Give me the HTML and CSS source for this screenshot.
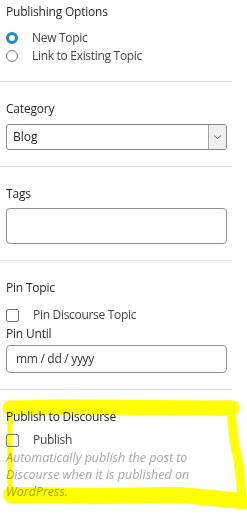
FILE: index.html
```html
<!DOCTYPE html>
<html>
<head>
<meta charset="utf-8">
<link rel="stylesheet" href="styles.css">
</head>
<body>
<div class="panel">
  <section class="sec sec-first">
    <h2 class="title">Publishing Options</h2>
    <div class="radios">
      <div class="opt"><span class="radio radio-on"></span>New Topic</div>
      <div class="opt"><span class="radio"></span>Link to Existing Topic</div>
    </div>
  </section>
  <section class="sec">
    <h2 class="title">Category</h2>
    <div class="select">
      <span class="select-value">Blog</span>
      <span class="select-btn"><svg width="9" height="6" viewBox="0 0 9 6"><path d="M1 1.5 L4.5 4.5 L8 1.5" fill="none" stroke="#6b6b6b" stroke-width="1"/></svg></span>
    </div>
  </section>
  <section class="sec">
    <h2 class="title">Tags</h2>
    <div class="field field-tags"></div>
  </section>
  <section class="sec">
    <h2 class="title">Pin Topic</h2>
    <div class="opt opt-check"><span class="check"></span>Pin Discourse Topic</div>
    <div class="sublabel">Pin Until</div>
    <div class="field field-date">mm / dd / yyyy</div>
  </section>
  <section class="sec sec-last">
    <h2 class="title">Publish to Discourse</h2>
    <div class="opt opt-check2"><span class="check"></span>Publish</div>
    <p class="desc">Automatically publish the post to Discourse when it is published on WordPress.</p>
  </section>
</div>
<svg class="highlight" width="247" height="521" viewBox="0 0 247 521">
  <path d="M10 497 L10 440 L10 410" fill="none" stroke="#ffff00" stroke-width="5" stroke-linecap="round"/>
  <path d="M10 408 L60 407 L232 408" fill="none" stroke="#ffff00" stroke-width="15" stroke-linecap="round" stroke-linejoin="round"/>
  <path d="M231 410 L234 440 L239 465 L242 496" fill="none" stroke="#ffff00" stroke-width="9" stroke-linecap="round" stroke-linejoin="round"/>
  <path d="M11 495 L100 496 L180 495 L243 501" fill="none" stroke="#ffff00" stroke-width="16" stroke-linecap="round" stroke-linejoin="round"/>
</svg>
</body>
</html>
```
FILE: styles.css
```css
html, body {
  margin: 0;
  padding: 0;
  background: #ffffff;
}
body {
  width: 247px;
  height: 521px;
  position: relative;
  overflow: hidden;
  font-family: "Open Sans", "Noto Sans", sans-serif;
  font-size: 12px;
  color: #32373c;
}
.panel {
  width: 232px;
}
.sec {
  padding: 18px 5px 16px 6px;
  border-bottom: 1px solid #e2e4e7;
}
.sec-first {
  padding-top: 3px;
}
.sec-last {
  border-bottom: none;
}
.title {
  margin: 0;
  font-size: 12px;
  font-weight: 400;
  line-height: 18px;
  letter-spacing: -0.2px;
  color: #23282d;
}
.radios {
  margin-top: 8px;
  display: flex;
  flex-direction: column;
}
.opt {
  display: flex;
  align-items: center;
  gap: 14px;
  height: 18px;
  line-height: 18px;
  letter-spacing: -0.3px;
  color: #3f444b;
}
.radio {
  width: 12px;
  height: 12px;
  box-sizing: border-box;
  border-radius: 50%;
  border: 1px solid #6e7479;
  background: #fff;
  flex: none;
}
.radio-on {
  border: 3.5px solid #1e8cbe;
  background: #fff;
}
.check {
  width: 13px;
  height: 13px;
  box-sizing: border-box;
  border: 1px solid #6e7479;
  border-radius: 2px;
  background: #fff;
  flex: none;
}
.opt-check {
  margin-top: 9px;
}
.opt-check2 {
  margin-top: 5px;
}
.sublabel {
  margin-top: 1px;
  line-height: 18px;
  letter-spacing: -0.2px;
  color: #23282d;
}
.select {
  margin-top: 6px;
  height: 26px;
  box-sizing: border-box;
  border: 1px solid #7e8993;
  border-radius: 3px;
  display: flex;
  align-items: stretch;
  overflow: hidden;
}
.select-value {
  flex: 1;
  padding-left: 6px;
  line-height: 24px;
  color: #23282d;
}
.select-btn {
  width: 17px;
  background: #f0f0f0;
  border-left: 1px solid #a0a5aa;
  display: flex;
  align-items: center;
  justify-content: center;
}
.field {
  margin-top: 5px;
  box-sizing: border-box;
  border: 1px solid #8c8f94;
  border-radius: 4px;
  background: #fff;
}
.field-tags {
  height: 36px;
}
.field-date {
  margin-top: 2px;
  height: 28px;
  line-height: 26px;
  padding-left: 9px;
  letter-spacing: -0.3px;
  color: #32373c;
}
.desc {
  margin: 0;
  font-style: italic;
  font-size: 12.5px;
  line-height: 17px;
  color: #a2a7ab;
}
.highlight {
  position: absolute;
  left: 0;
  top: 0;
  mix-blend-mode: multiply;
  pointer-events: none;
}
```
